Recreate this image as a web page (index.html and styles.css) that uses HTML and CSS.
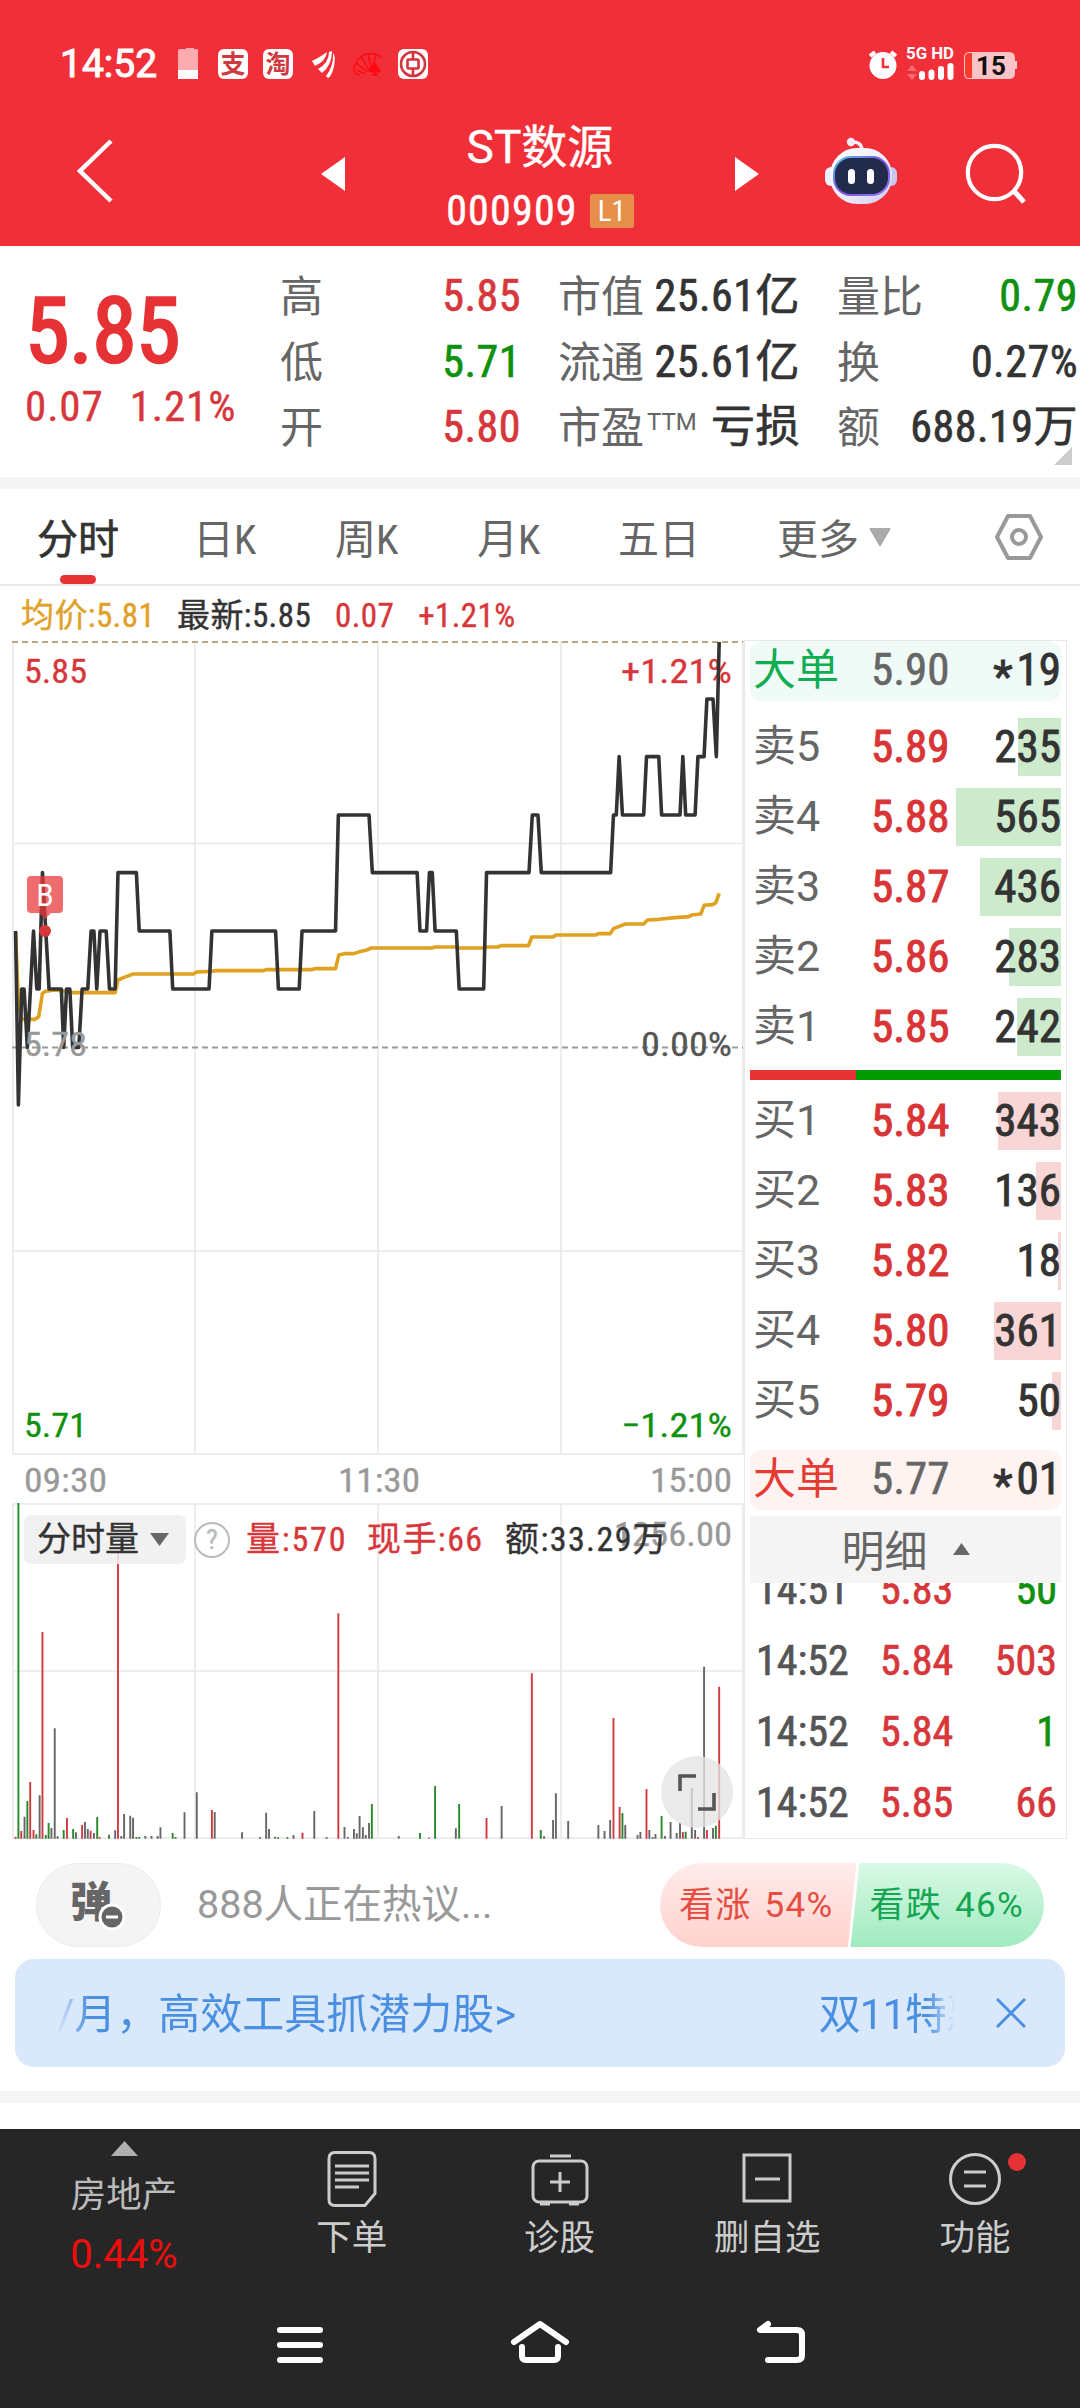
FILE: index.html
```html
<!DOCTYPE html>
<html lang="zh-CN">
<head>
  <meta charset="UTF-8" />
  <meta name="viewport" content="width=device-width, initial-scale=1.0" />
  <title>ST数源 000909</title>
  <link rel="stylesheet" href="styles.css">
</head>
<body>
  <header>
    <div class="status">
      <span class="clock">14:52</span>
      <svg class="status-left" width="260" height="34" viewBox="170 47 260 34">
        <path d="M183 49h3v-1h8v1h3q1 0 1 2v19h-20V51q0-2 2-2z" fill="#fbabaf"/>
        <path d="M178 70h20v9h-20z" fill="#fff"/>
        <rect x="218" y="49" width="30" height="30" rx="6" fill="#fff"/>
        <text x="233" y="73" class="app-char">支</text>
        <rect x="263" y="49" width="30" height="30" rx="6" fill="#fff"/>
        <text x="278" y="73" class="app-char">淘</text>
        <path d="M312 61q7-3 15-9q-1 9-12 14zM318 69q11-6 11-17l3-1q0 14-10 22zM326 76q8-10 7-23q3 3 1 13t-6 12z" fill="#fff"/>
        <g fill="none" stroke="#ff0a12" stroke-width="1.500">
          <path d="M360 75q-7-1-6-7t6-10q4-5 11-4 7-1 10 4M356 63l11 9M361 56l8 15M368 54l3 13M376 55l-3 9M357 70l8 4"/>
        </g>
        <path d="M375 62q1 3 4 6t0 5l-3-1 2 4h-6l2-4q-4 2-5-1t3-6z" fill="#ff0a12"/>
        <rect x="398" y="49" width="30" height="30" rx="6" fill="#fff"/>
        <g fill="none" stroke="#d4333c" stroke-width="2.600">
          <circle cx="413" cy="64" r="12"/>
          <path d="M413 53v6M413 69v6"/>
          <rect x="407.500" y="59.500" width="11" height="9" rx="1"/>
        </g>
      </svg>
      <svg class="status-right" width="152" height="36" viewBox="868 46 152 36">
        <circle cx="885" cy="65.500" r="13.500" fill="#fff"/>
        <path d="M872 56l5-4M893 52l5 4" stroke="#fff" stroke-width="4"/>
        <path d="M885 58v9h6" fill="none" stroke="#ef3038" stroke-width="2.600"/>
        <text x="908" y="59" class="net" textLength="48" lengthAdjust="spacingAndGlyphs">5G HD</text>
        <path d="M909 71l5-6 5 6zM909 74l5 6 5-6z" fill="#f8696f"/>
        <path d="M924 74v3M933.500 72.500v4.500M943 69v8M952.500 66v11" stroke="#fff" stroke-width="6" stroke-linecap="round"/>
        <path d="M971 52h40q6 0 6 6v3h2v8h-2v4q0 6-6 6h-40q-5 0-5-6V58q0-6 5-6z" fill="#fcc4c6"/>
        <path d="M974 53h-3q-4 0-4 5v15q0 5 4 5h3z" fill="#fb3b2d"/>
        <text x="978" y="75" class="level">15</text>
      </svg>
    </div>
    <div class="titlebar">
      <svg class="back" width="40" height="66" viewBox="0 0 40 66"><path d="M36 3L5 33l31 30" fill="none" stroke="#fff" stroke-width="4.500"/></svg>
      <svg class="prev" width="24" height="34" viewBox="0 0 24 34"><path d="M24 0v34L0 17z" fill="#fff"/></svg>
      <div class="stock">
        <h1>ST数源</h1>
        <p><span class="code">000909</span><span class="tag">L1</span></p>
      </div>
      <svg class="next" width="24" height="34" viewBox="0 0 24 34"><path d="M0 0v34l24-17z" fill="#fff"/></svg>
      <svg class="robot" width="74" height="68" viewBox="0 0 74 68">
        <defs>
          <linearGradient id="shell" x1="0" y1="0" x2="1" y2="1"><stop offset="0" stop-color="#fff"/><stop offset=".6" stop-color="#eceafa"/><stop offset="1" stop-color="#c9c7ee"/></linearGradient>
          <linearGradient id="rim" x1="0" y1="0" x2="1" y2="1"><stop offset="0" stop-color="#59c8ea"/><stop offset=".5" stop-color="#7a4be0"/><stop offset="1" stop-color="#8f7ff0"/></linearGradient>
        </defs>
        <path d="M27 5q11-1 11 9" fill="none" stroke="#f1eefb" stroke-width="3.500"/>
        <circle cx="27" cy="5" r="4.200" fill="#f3e9f5"/>
        <rect x="1" y="30" width="12" height="19" rx="6" fill="#f0effc"/>
        <rect x="61" y="30" width="12" height="19" rx="6" fill="#c9c5ee"/>
        <rect x="6" y="11" width="62" height="56" rx="27" fill="url(#shell)"/>
        <rect x="10" y="20" width="55" height="38" rx="17" fill="#232b4d" stroke="url(#rim)" stroke-width="2"/>
        <rect x="24" y="32" width="7" height="15" rx="3.500" fill="#fff"/>
        <rect x="43" y="32" width="7" height="15" rx="3.500" fill="#fff"/>
      </svg>
      <svg class="search" width="62" height="62" viewBox="0 0 62 62"><circle cx="29.500" cy="29.500" r="26.700" fill="none" stroke="#fff" stroke-width="4.200"/><path d="M48 47l11 12" stroke="#fff" stroke-width="5"/></svg>
    </div>
  </header>

  <section class="quote">
    <div class="price">
      <div class="big">5.85</div>
      <div class="change"><span>0.07</span><span>1.21%</span></div>
    </div>
    <div class="col col-a">
      <div><label>高</label><b class="up">5.85</b></div>
      <div><label>低</label><b class="down">5.71</b></div>
      <div><label>开</label><b class="up">5.80</b></div>
    </div>
    <div class="col col-b">
      <div><label>市值</label><b>25.61亿</b></div>
      <div><label>流通</label><b>25.61亿</b></div>
      <div><label>市盈<sup>TTM</sup></label><b>亏损</b></div>
    </div>
    <div class="col col-c">
      <div><label>量比</label><b class="down">0.79</b></div>
      <div><label>换</label><b>0.27%</b></div>
      <div><label>额</label><b>688.19万</b></div>
    </div>
    <i class="corner"></i>
  </section>

  <nav class="tabs">
    <a class="active">分时</a>
    <a>日K</a>
    <a>周K</a>
    <a>月K</a>
    <a>五日</a>
    <a class="more">更多<svg width="22" height="19" viewBox="0 0 22 19"><path d="M1 0h20q1 1 0 2L11 19 1 2Q0 1 1 0z" fill="#aaa"/></svg></a>
    <svg class="settings" width="50" height="48" viewBox="0 0 50 48"><path d="M14 3h22l11 21-11 21H14L3 24z" fill="none" stroke="#999" stroke-width="4" stroke-linejoin="round"/><circle cx="25" cy="24" r="7" fill="none" stroke="#999" stroke-width="4"/></svg>
  </nav>

  <div class="info">
    <span class="avg">均价:5.81</span>
    <span class="last">最新:5.85</span>
    <span class="up">0.07</span>
    <span class="up">+1.21%</span>
  </div>

  <main>
    <div class="charts">
      <svg width="744" height="1200" viewBox="0 640 744 1200">
        <!-- grid -->
        <g fill="none" stroke="#e8e8e8" stroke-width="1.500">
          <path d="M13 641V1454H743V641M13 843.500H743M13 1251H743M195 641V1454M378 641V1454M561 641V1454"/>
          <path d="M13 1504H743V1838H13zM13 1671H743M195 1504V1838M378 1504V1838M561 1504V1838"/>
        </g>
        <path d="M12 642H743" stroke="#bda77c" stroke-width="2" stroke-dasharray="6 4"/>
        <path d="M12 1047.500H743" stroke="#999" stroke-width="2" stroke-dasharray="6 4"/>

        <text x="24" y="683" class="lbl up" textLength="63" lengthAdjust="spacingAndGlyphs">5.85</text>
        <text x="732" y="683" class="lbl up end" textLength="111" lengthAdjust="spacingAndGlyphs">+1.21%</text>
        <text x="24" y="1437" class="lbl down" textLength="63" lengthAdjust="spacingAndGlyphs">5.71</text>
        <text x="732" y="1437" class="lbl down end" textLength="111" lengthAdjust="spacingAndGlyphs">−1.21%</text>

        <!-- average and price lines -->
        <g transform="translate(0 620) scale(.4719 .33333)" fill="none" stroke-width="3.600" stroke-linejoin="round">
          <polyline vector-effect="non-scaling-stroke" stroke="#e0a020" points="33,933 39,1150 46,1198 74,1198 82,1190 90,1120 97,1114 116,1110 135,1113 154,1118 244,1118 250,1080 263,1072 282,1062 410,1062 417,1056 449,1054 456,1052 558,1052 564,1049 660,1049 667,1046 711,1046 718,1005 730,1001 750,1001 762,995 775,991 787,984 915,984 922,981 967,981 973,984 1025,984 1032,981 1055,981 1062,977 1120,977 1127,951 1172,951 1178,945 1262,945 1268,941 1293,941 1300,926 1325,912 1364,912 1372,900 1396,898 1430,893 1460,890 1466,885 1485,882 1492,856 1510,854 1517,848 1524,820"/>
          <polyline vector-effect="non-scaling-stroke" stroke="#333" points="33,933 39,1455 46,1107 51,1107 58,1282 71,933 78,1107 83,1107 90,758 97,933 104,1107 130,1107 135,1282 141,1107 148,1107 154,1282 167,1282 174,1107 186,1107 193,933 199,933 205,1107 212,933 225,933 232,1107 244,1107 250,758 289,758 295,933 360,933 366,1107 443,1107 449,933 584,933 590,1107 634,1107 640,933 711,933 717,585 782,585 789,758 884,758 890,933 904,933 910,758 916,758 922,933 967,933 973,1107 1025,1107 1031,758 1121,758 1128,585 1140,585 1147,758 1294,758 1300,585 1306,585 1312,410 1319,585 1364,585 1370,410 1396,410 1402,585 1441,585 1447,410 1453,585 1473,585 1479,410 1492,410 1498,237 1511,237 1518,410 1524,66"/>
        </g>

        <text x="24" y="1056" class="lbl mid" textLength="63" lengthAdjust="spacingAndGlyphs">5.78</text>
        <text x="732" y="1056" class="lbl zero end" textLength="91" lengthAdjust="spacingAndGlyphs">0.00%</text>

        <!-- buy mark -->
        <path d="M31 876h28q4 0 4 4v29q0 4-4 4h-8l-6 6-6-6h-8q-4 0-4-4v-29q0-4 4-4z" fill="#e93b3e" fill-opacity=".75"/>
        <circle cx="45" cy="931" r="6" fill="#d7373b"/>
        <text x="45" y="905.500" class="mark">B</text>

        <text x="24" y="1492" class="lbl axis" textLength="83" lengthAdjust="spacingAndGlyphs">09:30</text>
        <text x="338" y="1492" class="lbl axis" textLength="82" lengthAdjust="spacingAndGlyphs">11:30</text>
        <text x="732" y="1492" class="lbl axis end" textLength="82" lengthAdjust="spacingAndGlyphs">15:00</text>
        <text x="732" y="1546" class="lbl axis end" textLength="118" lengthAdjust="spacingAndGlyphs">1256.00</text>

        <!-- volume -->
        <g transform="translate(0 1400) scale(.4719 .33333)" fill="none" stroke-width="1.900">
          <path vector-effect="non-scaling-stroke" stroke="#666" d="M52 1316V1250M84 1316V1186M109 1316V1284M116 1316V985M122 1316V1309M161 1316V1297M180 1316V1266M186 1316V1287M199 1316V1299M244 1316V1291M257 1316V1308M263 1316V1242M276 1316V1247M282 1316V1253M308 1316V1308M321 1316V1308M334 1316V1308M340 1316V1282M372 1316V1311M391 1316V1237M417 1316V1177M455 1316V1236M513 1316V1297M551 1316V1311M564 1316V1238M570 1316V1287M583 1316V1310M609 1316V1311M622 1316V1305M666 1316V1233M692 1316V1311M730 1316V1281M737 1316V1311M750 1316V1287M756 1316V1300M762 1316V1248M769 1316V1282M775 1316V1305M782 1316V1269M845 1316V1308M966 1316V1285M1063 1316V1218M1153 1316V1309M1172 1316V1260M1178 1316V1180M1204 1316V1263M1268 1316V1275M1281 1316V1293M1293 1316V1260M1325 1316V1275M1351 1316V1305M1357 1316V1296M1376 1316V1290M1383 1316V1311M1389 1316V1302M1409 1316V1308M1421 1316V1266M1434 1316V1299M1441 1316V1268M1466 1316V1163M1473 1316V1290M1492 1316V800M1511 1316V1284"/>
          <path vector-effect="non-scaling-stroke" stroke="#d03a3e" d="M33 1316V1310M45 1316V1293M64 1316V1146M71 1316V1290M90 1316V696M142 1316V1254M174 1316V1275M192 1316V1292M211 1316V1311M250 1316V455M449 1316V1230M641 1316V1298M717 1316V640M909 1316V1313M1031 1316V1254M1127 1316V820M1300 1316V954M1313 1316V1221M1370 1316V1167M1447 1316V1296M1479 1316V1311M1498 1316V1290M1524 1316V860"/>
          <path vector-effect="non-scaling-stroke" stroke="#27882a" d="M39 1316V309M58 1316V1203M77 1316V1303M97 1316V1305M103 1316V1269M135 1316V1290M155 1316V1287M206 1316V1251M231 1316V1304M289 1316V1311M295 1316V1311M366 1316V1299M589 1316V1312M788 1316V1212M890 1316V1299M922 1316V1158M973 1316V1212M1146 1316V1290M1319 1316V1239M1402 1316V1248M1453 1316V1295M1517 1316V1277"/>
        </g>

        <!-- full screen button -->
        <circle cx="697" cy="1792" r="36" fill="#e4e4e4" fill-opacity=".78"/>
        <path d="M680 1791V1776H696M698 1809H714V1793" fill="none" stroke="#555" stroke-width="3.600"/>
      </svg>
      <div class="legend">
        <span class="pick">分时量<svg width="19" height="13" viewBox="0 0 19 13"><path d="M0 0h19l-9.500 13z" fill="#666"/></svg></span>
        <span class="help">?</span>
        <span class="up l1">量:570</span>
        <span class="up l2">现手:66</span>
        <span class="l3">额:33.29万</span>
      </div>
    </div>

    <aside class="book">
      <div class="row large sell"><em>大单</em><b>5.90</b><u><s>*</s>19</u></div>
      <div class="side">
        <div class="row"><i class="bar g" style="width:43px"></i><em>卖5</em><b>5.89</b><u>235</u></div>
        <div class="row"><i class="bar g" style="width:105px"></i><em>卖4</em><b>5.88</b><u>565</u></div>
        <div class="row"><i class="bar g" style="width:81px"></i><em>卖3</em><b>5.87</b><u>436</u></div>
        <div class="row"><i class="bar g" style="width:52px"></i><em>卖2</em><b>5.86</b><u>283</u></div>
        <div class="row"><i class="bar g" style="width:44px"></i><em>卖1</em><b>5.85</b><u>242</u></div>
      </div>
      <div class="ratio"><i style="width:34.200%"></i></div>
      <div class="side bids">
        <div class="row"><i class="bar r" style="width:63px"></i><em>买1</em><b>5.84</b><u>343</u></div>
        <div class="row"><i class="bar r" style="width:25px"></i><em>买2</em><b>5.83</b><u>136</u></div>
        <div class="row"><i class="bar r" style="width:3px"></i><em>买3</em><b>5.82</b><u>18</u></div>
        <div class="row"><i class="bar r" style="width:67px"></i><em>买4</em><b>5.80</b><u>361</u></div>
        <div class="row"><i class="bar r" style="width:9px"></i><em>买5</em><b>5.79</b><u>50</u></div>
      </div>
      <div class="row large buy"><em>大单</em><b>5.77</b><u><s>*</s>01</u></div>
      <div class="detail">明细<svg width="17" height="12" viewBox="0 0 17 12"><path d="M0 12h17L8.500 0z" fill="#666"/></svg></div>
      <div class="ticks">
        <div class="tick"><em>14:51</em><b>5.83</b><u class="down">50</u></div>
        <div class="tick"><em>14:52</em><b>5.84</b><u class="up">503</u></div>
        <div class="tick"><em>14:52</em><b>5.84</b><u class="down">1</u></div>
        <div class="tick"><em>14:52</em><b>5.85</b><u class="up">66</u></div>
      </div>
    </aside>
  </main>

  <section class="talk">
    <div class="danmu">弹<svg width="28" height="28" viewBox="0 0 28 28"><circle cx="14" cy="14" r="12" fill="#666" stroke="#fff" stroke-width="3"/><path d="M8 14h12" stroke="#fff" stroke-width="3"/></svg></div>
    <p>888人正在热议...</p>
    <div class="vote">
      <span class="bull">看涨 54%</span>
      <span class="bear">看跌 46%</span>
    </div>
  </section>

  <section class="banner">
    <div class="marquee"><span>/月，高效工具抓潜力股&gt;</span><span class="second">双11特惠</span></div>
    <svg width="30" height="30" viewBox="0 0 30 30"><path d="M1 1l28 28M29 1L1 29" stroke="#4a8fe0" stroke-width="3"/></svg>
  </section>
  <div class="divider"></div>

  <footer>
    <div class="actions">
      <div class="sector">
        <svg width="27" height="15" viewBox="0 0 27 15"><path d="M0 15h27L13.500 0z" fill="#b0b0b0"/></svg>
        <span>房地产</span>
        <strong>0.44%</strong>
      </div>
      <div class="action">
        <svg width="60" height="60" viewBox="-30 -30 60 60"><path d="M-17-26.500h34q6 0 6 6v35L13 26.500h-30q-6 0-6-6v-41q0-6 6-6z"/><path d="M-17-13h34M-17-6h34M-17 1h34M-17 8H7"/></svg>
        <span>下单</span>
      </div>
      <div class="action">
        <svg width="60" height="60" viewBox="-30 -30 60 60"><rect x="-27" y="-18" width="54" height="41" rx="6"/><path d="M-10-23h21M0-7v20M-10 3h20M-20 25h10M9 25h10"/></svg>
        <span>诊股</span>
      </div>
      <div class="action">
        <svg width="60" height="60" viewBox="-30 -30 60 60"><rect x="-23" y="-24" width="46" height="46"/><path d="M-12 0h25"/></svg>
        <span>删自选</span>
      </div>
      <div class="action">
        <svg width="60" height="60" viewBox="-30 -30 60 60"><circle cx="0" cy="0" r="24.500"/><path d="M-11-7h22M-11 7h22"/></svg>
        <span>功能</span>
        <i class="dot"></i>
      </div>
    </div>
    <div class="system">
      <svg width="240" height="50" viewBox="180 2320 240 50"><path d="M280 2330h40M280 2345h40M280 2360h40"/></svg>
      <svg width="240" height="50" viewBox="420 2320 240 50"><path d="M514 2342l26-18 26 18M522 2347v9q0 4 4 4h28q4 0 4-4v-9"/></svg>
      <svg width="240" height="50" viewBox="660 2320 240 50"><path d="M768 2324l-8 6h37q5 0 5 5v20q0 5-5 5h-29"/></svg>
    </div>
  </footer>
</body>
</html>
```
FILE: styles.css
```css
* {
  box-sizing: border-box;
}
body {
  margin: 0;
  width: 1080px;
  height: 2408px;
  overflow: hidden;
  background: #fff;
  color: #333;
  font-family: Roboto, "Noto Sans CJK SC", sans-serif;
  font-stretch: 87%;
  white-space: nowrap;
}
svg {
  display: block;
  flex: none;
}
b, strong, em, i, u, s {
  font-weight: 400;
  font-style: normal;
  text-decoration: none;
}
.up { color: #d7373b; fill: #d7373b; }
.down { color: #0f910f; fill: #0f910f; }

/* header */
header {
  height: 246px;
  background: #f12f38;
  color: #fff;
}
.status {
  display: flex;
  align-items: center;
  height: 128px;
  padding: 0 62px 0 60px;
}
.clock {
  font: 400 39px/40px Roboto, sans-serif;
  -webkit-text-stroke: 1px;
  width: 110px;
}
.status-right {
  margin-left: auto;
}
.app-char {
  font: 700 25px "Noto Sans CJK SC", sans-serif;
  fill: #cf3a40;
  text-anchor: middle;
}
.net {
  font: 700 16px Roboto, sans-serif;
  fill: #fff;
}
.level {
  font: 700 26px Roboto, sans-serif;
  fill: #111;
}
.titlebar {
  display: flex;
  align-items: flex-start;
  height: 118px;
}
.back { margin: 10px 0 0 75px; }
.prev { margin: 29px 0 0 206px; }
.stock {
  width: 390px;
  text-align: center;
}
h1 {
  margin: -6px 0 0;
  font-size: 46px;
  font-weight: 400;
  line-height: 50px;
  font-stretch: 100%;
  -webkit-text-stroke: .4px;
}
.stock p {
  display: flex;
  justify-content: center;
  align-items: center;
  gap: 12px;
  margin: 14px 0 0;
  font-size: 42px;
  line-height: 50px;
}
.code {
  letter-spacing: 1.200px;
  -webkit-text-stroke: .5px;
}
.tag {
  width: 44px;
  height: 34px;
  border-radius: 2px;
  background: #e58f4a;
  font-size: 29px;
  line-height: 35px;
}
.next { margin: 29px 0 0; }
.robot { margin: 9px 0 0 65px; }
.search { margin: 15px 0 0 67px; }

/* quote */
.quote {
  position: relative;
  display: flex;
  height: 243px;
  padding-top: 17px;
  border-bottom: 12px solid #f4f4f4;
}
.price {
  width: 280px;
  padding-left: 25px;
  color: #e63235;
}
.big {
  margin-top: 14px;
  font-size: 90px;
  line-height: 110px;
  letter-spacing: -.5px;
  -webkit-text-stroke: 2.500px;
}
.change {
  display: flex;
  gap: 26px;
  margin-top: -11px;
  font-size: 43px;
  line-height: 60px;
  color: #d7373b;
  letter-spacing: .9px;
  -webkit-text-stroke: .4px;
}
.col div {
  display: flex;
  justify-content: space-between;
  height: 65.500px;
  font-size: 44px;
  line-height: 66px;
}
.col label {
  position: relative;
  top: 1px;
  font-size: 43px;
  color: #666;
}
.col b {
  letter-spacing: .5px;
  -webkit-text-stroke: .7px;
}
.col-a { width: 241px; }
.col-b { width: 242px; margin-left: 37px; }
.col-c { width: 241px; margin-left: 37px; }
sup {
  font-size: 24px;
  line-height: 1;
  vertical-align: 13px;
  margin-left: 3px;
  font-stretch: 100%;
}
.corner {
  position: absolute;
  right: 8px;
  bottom: 12px;
  border: 9px solid #ccc;
  border-left-color: transparent;
  border-top-color: transparent;
}

/* tabs */
.tabs {
  display: flex;
  height: 97px;
  padding-left: 37px;
  border-bottom: 2px solid #e8e8e8;
  font-size: 41px;
  line-height: 102px;
  color: #666;
}
.tabs a {
  width: 142px;
}
.tabs a:nth-child(1) { width: 156px; }
.tabs a:nth-child(4) { width: 141px; }
.tabs a:nth-child(5) { width: 159px; }
.tabs .active {
  position: relative;
  color: #333;
  -webkit-text-stroke: .7px;
}
.active::after {
  content: "";
  position: absolute;
  left: 23px;
  bottom: 0;
  width: 36px;
  height: 9px;
  border-radius: 5px;
  background: #e63235;
}
.tabs .more {
  display: flex;
  gap: 10px;
  width: 217px;
}
.more svg { margin-top: 39px; }
.settings {
  margin-top: 24px;
}

.info {
  display: flex;
  height: 54px;
  padding-left: 21px;
  font-size: 33px;
  line-height: 60px;
  -webkit-text-stroke: .4px;
}
.info span { margin-right: 24px; letter-spacing: .4px; }
.info .avg { color: #dfa128; width: 132px; }

/* charts */
main {
  display: flex;
  height: 1200px;
}
.charts {
  position: relative;
  width: 744px;
}
.lbl {
  font-size: 34px;
  stroke-width: .3px;
}
.lbl.up { stroke: #d7373b; }
.lbl.down { stroke: #0f910f; }
.end { text-anchor: end; }
.mid { fill: #999; stroke: #999; }
.zero { fill: #555; stroke: #555; }
.axis { fill: #999; stroke: #999; }
.mark {
  font-size: 32px;
  fill: #fff;
  text-anchor: middle;
}
.legend {
  position: absolute;
  left: 24px;
  top: 875px;
  display: flex;
  align-items: center;
  height: 49px;
  font-size: 34px;
  line-height: 51px;
  -webkit-text-stroke: .4px;
}
.pick {
  display: flex;
  align-items: center;
  gap: 11px;
  width: 162px;
  height: 49px;
  padding-left: 13px;
  border-radius: 7px;
  background: rgba(238, 238, 238, .85);
}
.help {
  width: 36px;
  height: 36px;
  margin: 0 16px 0 8px;
  border: 2.500px solid #bbb;
  border-radius: 50%;
  color: #bbb;
  font-size: 28px;
  line-height: 32px;
  text-align: center;
}
.l1 { width: 121px; letter-spacing: 1.800px; }
.l2 { width: 138px; letter-spacing: 1.400px; }
.l3 { letter-spacing: 1.400px; }

/* order book */
.book {
  width: 323px;
  height: 1199px;
  padding: 0 5px;
  border: 1px solid #e8e8e8;
  overflow: hidden;
}
.row {
  position: relative;
  display: flex;
  height: 58px;
  margin-bottom: 12px;
  font-size: 45px;
  line-height: 57px;
}
.row em {
  position: relative;
  width: 121px;
  padding-left: 3px;
  font-size: 43px;
  font-stretch: 100%;
  color: #666;
}
.row b {
  position: relative;
  color: #d93436;
  -webkit-text-stroke: 1px;
}
.row u {
  position: relative;
  margin-left: auto;
  -webkit-text-stroke: .9px;
}
.row s {
  position: relative;
  top: 7px;
  margin-right: 4px;
}
.large {
  height: 60px;
  margin: 0;
  border-radius: 12px;
  line-height: 58px;
}
.large b { color: #666; -webkit-text-stroke: .6px; }
.sell { background: #f0faf6; }
.row.sell em { color: #10ad52; }
.buy { background: #fff3f2; }
.row.buy em { color: #e63b33; }
.side {
  display: flow-root;
  padding-top: 17px;
}
.bids {
  padding-top: 12px;
  padding-bottom: 8px;
}
.bar {
  position: absolute;
  right: 0;
  top: 0;
  height: 58px;
}
.g { background: #cdeacd; }
.r { background: #f9d6d6; }
.ratio {
  height: 10px;
  margin-top: 2px;
  background: #009a00;
}
.ratio i {
  display: block;
  height: 10px;
  background: #e63235;
}
.detail {
  display: flex;
  justify-content: center;
  gap: 25px;
  height: 67px;
  margin-top: 6px;
  background: #f4f4f4;
  font-size: 43px;
  line-height: 72px;
  color: #666;
}
.detail svg { margin-top: 27px; }
.ticks {
  height: 256px;
  overflow: hidden;
}
.tick {
  display: flex;
  height: 71px;
  padding: 0 4px 0 6px;
  font-size: 42px;
  line-height: 71px;
  -webkit-text-stroke: .7px;
}
.tick:first-child { margin-top: -29px; }
.tick em { width: 124px; color: #555; }
.tick b { color: #d7373b; }
.tick u { margin-left: auto; }

/* discussion */
.talk {
  display: flex;
  align-items: center;
  height: 84px;
  margin: 23px 36px 12px;
  font-stretch: 100%;
}
.danmu {
  position: relative;
  width: 125px;
  height: 84px;
  border: 1px solid #ececec;
  border-radius: 42px;
  background: #f4f4f4;
  color: #666;
  font-size: 42px;
  font-weight: 900;
  line-height: 78px;
  padding-left: 33px;
}
.danmu svg {
  position: absolute;
  left: 61px;
  top: 39px;
}
.talk p {
  margin: 0 0 0 36px;
  font-size: 39.500px;
  line-height: 88px;
  color: #999;
}
.vote {
  display: flex;
  width: 384px;
  height: 84px;
  margin-left: auto;
  border-radius: 42px;
  overflow: hidden;
  font-size: 35px;
  line-height: 86px;
}
.vote span {
  letter-spacing: 1.300px;
  word-spacing: 3px;
}
.bull {
  width: 199px;
  padding-left: 19px;
  color: #e64c3f;
  background: linear-gradient(#ffeceb, #ffd2cd);
  clip-path: polygon(0 0, 100% 0, 188px 100%, 0 100%);
}
.bear {
  width: 196px;
  margin-left: -6px;
  padding-left: 19px;
  color: #16a653;
  background: linear-gradient(#daf9e6, #9febbf);
  clip-path: polygon(9px 0, 100% 0, 100% 100%, 0 100%);
}

.banner {
  display: flex;
  align-items: center;
  height: 108px;
  margin: 0 15px;
  padding: 0 39px 0 42px;
  border-radius: 19px;
  background: #d9e8fb;
  color: #4a8fe0;
  font-size: 42px;
  font-stretch: 100%;
}
.marquee {
  display: flex;
  width: 898px;
  margin-right: 41px;
  overflow: hidden;
  line-height: 64px;
  padding-top: 3px;
  -webkit-mask-image: linear-gradient(90deg, transparent, #000 32px, #000 870px, transparent);
  mask-image: linear-gradient(90deg, transparent, #000 32px, #000 870px, transparent);
}
.second {
  margin-left: auto;
  margin-right: -32px;
  letter-spacing: -1px;
}
.divider {
  height: 12px;
  margin: 24px 0 26px;
  background: #f4f4f4;
}

/* bottom */
footer {
  height: 279px;
  background: #262626;
  color: #ccc;
}
.actions {
  display: flex;
  height: 172px;
  font-size: 35.500px;
  line-height: 44px;
}
.sector {
  display: flex;
  flex-direction: column;
  align-items: center;
  width: 248px;
  padding-top: 12px;
  color: #bbb;
}
.sector span { margin-top: 17px; }
.sector strong {
  margin-top: 16px;
  font-size: 40px;
  font-stretch: 100%;
  color: #ef0d0d;
}
.action {
  position: relative;
  display: flex;
  flex-direction: column;
  align-items: center;
  width: 207.700px;
  padding-top: 20px;
}
.action svg {
  fill: none;
  stroke: #ccc;
  stroke-width: 3px;
}
.action span { margin-top: 7px; }
.dot {
  position: absolute;
  left: 137px;
  top: 24px;
  width: 18px;
  height: 18px;
  border-radius: 50%;
  background: #e63235;
}
.system {
  display: flex;
  justify-content: center;
  margin-top: 19px;
}
.system svg {
  fill: none;
  stroke: #fff;
  stroke-width: 6px;
  stroke-linecap: round;
  stroke-linejoin: round;
}
```
